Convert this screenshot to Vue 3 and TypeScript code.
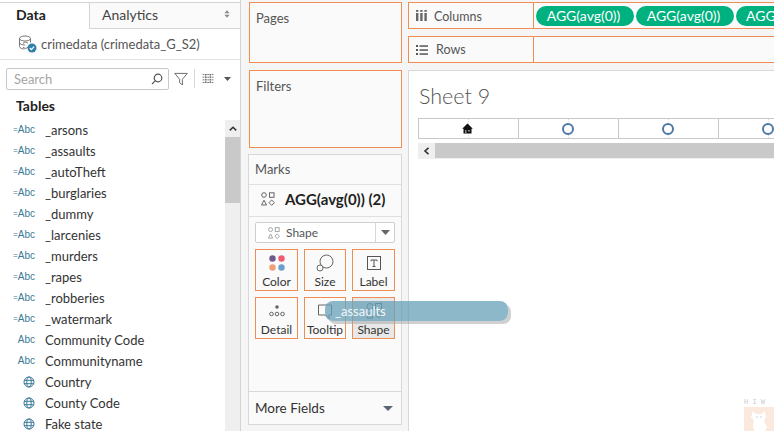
<script setup lang="ts">
type Field = { name: string; kind: 'eq' | 'abc' | 'geo' }
const names: string[] = ['_arsons', '_assaults', '_autoTheft', '_burglaries', '_dummy', '_larcenies', '_murders', '_rapes', '_robberies', '_watermark']
const fields: Field[] = [
  ...names.map((name): Field => ({ name, kind: 'eq' })),
  { name: 'Community Code', kind: 'abc' },
  { name: 'Communityname', kind: 'abc' },
  { name: 'Country', kind: 'geo' },
  { name: 'County Code', kind: 'geo' },
  { name: 'Fake state', kind: 'geo' },
]
const pills = ['AGG(avg(0))', 'AGG(avg(0))']
</script>

<template>
  <div class="app">
    <aside class="data-pane">
      <div class="tabs">
        <div class="tab active">Data</div>
        <div class="tab other">
          <span>Analytics</span>
          <svg class="updown" width="6" height="8" viewBox="0 0 7 9"><path d="M3.5 0 6.5 3.5H.5ZM3.5 9 .5 5.5h6Z" fill="#888" /></svg>
        </div>
      </div>
      <div class="source">
        <svg width="19" height="18" viewBox="0 0 19 18" fill="none" stroke="#777" stroke-width="1">
          <ellipse cx="7" cy="3.500" rx="5.500" ry="2.500" />
          <path d="M1.500 3.500v8c0 1.400 2.500 2.500 5 2.500M12.500 3.500v4M1.500 7.500c0 1.400 2.500 2.500 5.500 2.500" />
          <path d="M5 8.500a3 3 0 0 1 5 0M10 12a3 3 0 0 1-5 0" />
          <circle cx="14" cy="13" r="4.500" fill="#2f7fa8" stroke="none" />
          <path d="M11.800 13l1.600 1.600 2.700-3" stroke="#fff" stroke-width="1.200" />
        </svg>
        <span>crimedata (crimedata_G_S2)</span>
      </div>
      <div class="search-row">
        <div class="search">
          <span>Search</span>
          <svg width="12" height="12" viewBox="0 0 12 12" fill="none" stroke="#555" stroke-width="1.200"><circle cx="7" cy="5" r="3.800" /><path d="M4.200 7.800 1 11" /></svg>
        </div>
        <svg class="funnel" width="14" height="14" viewBox="0 0 15 15" fill="none" stroke="#666"><path d="M.8 1.500h13.400L9 7.800v6L6 11.500V7.800Z" /></svg>
        <div class="vsep"></div>
        <svg width="14" height="9" viewBox="0 0 14 10" stroke="#666" fill="none"><path d="M1 .5h12M1 3.500h12M1 6.500h12M1 9.500h12M4.500 0v10M9.500 0v10" stroke-dasharray="2 .6" /></svg>
        <svg class="caret" width="7" height="4" viewBox="0 0 9 5"><path d="M0 0h9L4.500 5Z" fill="#555" /></svg>
      </div>
      <div class="tables">Tables</div>
      <div class="list-wrap">
        <ul class="fields">
          <li v-for="f in fields" :key="f.name">
            <span class="type">
              <template v-if="f.kind === 'eq'"><small>=</small>Abc</template>
              <template v-else-if="f.kind === 'abc'">Abc</template>
              <svg v-else width="12" height="12" viewBox="0 0 12 12" fill="none" stroke="#3b7a98" stroke-width="1"><circle cx="6" cy="6" r="5" /><ellipse cx="6" cy="6" rx="2.200" ry="5" /><path d="M1 4.300h10M1 7.700h10" /></svg>
            </span>
            <span class="fname">{{ f.name }}</span>
          </li>
        </ul>
        <div class="vscroll">
          <div class="vbtn"><svg width="8" height="5" viewBox="0 0 8 5" fill="none" stroke="#333" stroke-width="1.500"><path d="M.8 4.400 4 1.200l3.200 3.200" /></svg></div>
          <div class="vthumb"></div>
        </div>
      </div>
    </aside>

    <section class="cards">
      <div class="card drop pages"><span class="card-title">Pages</span></div>
      <div class="card drop filters"><span class="card-title">Filters</span></div>
      <div class="marks">
        <div class="marks-title">Marks</div>
        <div class="marks-agg">
          <svg width="14" height="14" viewBox="0 0 14 14" fill="none" stroke="#666"><circle cx="3" cy="3" r="2.300" /><rect x="8.500" y=".8" width="4.500" height="4.500" /><path d="M3 8.200l2.500 4.800H.5Z" /><path d="M10.700 8l2.700 2.700-2.700 2.700L8 10.700Z" /></svg>
          <strong>AGG(avg(0)) (2)</strong>
        </div>
        <div class="select">
          <svg width="12" height="12" viewBox="0 0 14 14" fill="none" stroke="#999"><circle cx="3" cy="3" r="2.300" /><rect x="8.500" y=".8" width="4.500" height="4.500" /><path d="M3 8.200l2.500 4.800H.5Z" /><path d="M10.700 8l2.700 2.700-2.700 2.700L8 10.700Z" /></svg>
          <span class="select-text">Shape</span>
          <div class="select-arrow"><svg width="9" height="5" viewBox="0 0 9 5"><path d="M0 0h9L4.500 5Z" fill="#666" /></svg></div>
        </div>
        <div class="mark-grid">
          <div class="mark-btn">
            <svg width="18" height="18" viewBox="0 0 18 18"><circle cx="4.500" cy="4.500" r="3.200" fill="#6f5a8e" /><circle cx="13.500" cy="4.500" r="3.200" fill="#ee5b72" /><circle cx="4.500" cy="13.500" r="3.200" fill="#eca078" /><circle cx="13.500" cy="13.500" r="3.200" fill="#6b9fcb" /></svg>
            <span>Color</span>
          </div>
          <div class="mark-btn">
            <svg width="18" height="18" viewBox="0 0 18 18" fill="none" stroke="#666" stroke-width="1"><circle cx="10.500" cy="7.500" r="6.500" /><circle cx="4" cy="14" r="3" fill="#fafafa" /></svg>
            <span>Size</span>
          </div>
          <div class="mark-btn">
            <svg width="18" height="18" viewBox="0 0 18 18" fill="none" stroke="#555"><rect x="2.500" y="2.500" width="13" height="13" /><path d="M6 6h6M9 6v6.500M7.500 12.500h3M6 6v1.200M12 6v1.200" /></svg>
            <span>Label</span>
          </div>
          <div class="mark-btn">
            <svg width="18" height="18" viewBox="0 0 18 18" fill="none" stroke="#666"><circle cx="9" cy="5" r="1.800" fill="#666" stroke="none" /><circle cx="3.500" cy="12" r="1.800" /><circle cx="9" cy="12" r="1.800" /><circle cx="14.500" cy="12" r="1.800" /></svg>
            <span>Detail</span>
          </div>
          <div class="mark-btn">
            <svg width="18" height="18" viewBox="0 0 18 18" fill="none" stroke="#666"><path d="M2.500 3h13v10h-2.500v3.500L9.500 13H2.500Z" /></svg>
            <span>Tooltip</span>
          </div>
          <div class="mark-btn hot">
            <svg width="18" height="18" viewBox="0 0 18 18" fill="none" stroke="#666"><circle cx="5" cy="4.500" r="3" /><rect x="10.500" y="1.500" width="6" height="6" /><path d="M5 10l3 6H2Z" /><path d="M13.500 10l3 3-3 3-3-3Z" /></svg>
            <span>Shape</span>
          </div>
        </div>
        <div class="more">
          <span>More Fields</span>
          <svg width="10" height="5" viewBox="0 0 10 5"><path d="M0 0h10L5 5Z" fill="#5a6672" /></svg>
        </div>
      </div>
    </section>

    <main class="work">
      <div class="shelf">
        <div class="shelf-label">
          <svg width="11" height="11" viewBox="0 0 11 11" fill="#666"><rect x="0" y="3" width="2.400" height="8" /><rect x="4.200" y="3" width="2.400" height="8" /><rect x="8.400" y="3" width="2.400" height="8" /><rect x="0" y="0" width="2.400" height="1.800" /><rect x="4.200" y="0" width="2.400" height="1.800" /><rect x="8.400" y="0" width="2.400" height="1.800" /></svg>
          <span class="shelf-name columns">Columns</span>
        </div>
        <div class="shelf-body">
          <span v-for="(p, i) in pills" :key="i" class="pill">{{ p }}</span>
          <span class="pill cut">AGG</span>
        </div>
      </div>
      <div class="shelf">
        <div class="shelf-label">
          <svg width="12" height="10" viewBox="0 0 12 10" fill="#555"><rect y="0" width="2" height="2" /><rect y="4" width="2" height="2" /><rect y="8" width="2" height="2" /><rect x="3.500" y=".3" width="8.500" height="1.500" /><rect x="3.500" y="4.300" width="8.500" height="1.500" /><rect x="3.500" y="8.300" width="8.500" height="1.500" /></svg>
          <span class="shelf-name">Rows</span>
        </div>
        <div class="shelf-body"></div>
      </div>
      <div class="sheet">
        <h1>Sheet 9</h1>
        <div class="viz">
          <div class="cell">
            <svg width="11" height="11" viewBox="0 0 11 11"><path d="M5.500 .5 10.800 5.800H9.500V10.500H1.500V5.800H.2Z" fill="#111" /><path d="M3 7h1.500v3.500H3ZM6 7h2v1.500H6Z" fill="#888" /></svg>
          </div>
          <div class="cell"><i class="ring"></i></div>
          <div class="cell"><i class="ring"></i></div>
          <div class="cell"><i class="ring"></i></div>
        </div>
        <div class="hscroll">
          <div class="hbtn"><svg width="7" height="8" viewBox="0 0 7 8" fill="none" stroke="#333" stroke-width="1.600"><path d="M5.500 .8 2 4l3.500 3.200" /></svg></div>
          <div class="hthumb"></div>
        </div>
      </div>
    </main>

    <div class="drag">_assaults</div>
    <div class="mascot" aria-hidden="true">
      <span>H I W</span>
      <svg width="30" height="24" viewBox="0 0 30 24"><rect width="30" height="24" fill="#fbe9dd" /><path d="M9 4l3 3h5l4-3 1 6-2 4 3 6-2 4H10l-1-6 1-5-3-3Z" fill="#fff" /><circle cx="13" cy="10" r=".8" fill="#ccc" /><circle cx="17" cy="10" r=".8" fill="#ccc" /></svg>
    </div>
  </div>
</template>

<style scoped>
.app {
  position: relative;
  display: flex;
  width: 774px;
  height: 431px;
  overflow: hidden;
  background: #f5f5f5;
  font-family: Lato, "Liberation Sans", sans-serif;
  color: #333;
}

/* data pane */
.data-pane {
  display: flex;
  flex-direction: column;
  flex: none;
  width: 241px;
  height: 431px;
  box-sizing: border-box;
  background: #fff;
  border-right: 1px solid #d4d4d4;
}
.tabs {
  display: flex;
  flex: none;
  height: 27px;
  margin-top: 2px;
  border-top: 1px solid #d4d4d4;
  box-sizing: border-box;
}
.tab {
  display: flex;
  align-items: center;
  padding-bottom: 3px;
  font-size: 14px;
}
.tab.active {
  width: 89px;
  padding-left: 16px;
  box-sizing: border-box;
  font-weight: 700;
  color: #222;
}
.tab.other {
  flex: 1;
  justify-content: space-between;
  padding: 0 10px 3px 12px;
  background: #fafafa;
  border-left: 1px solid #d4d4d4;
  border-bottom: 1px solid #d4d4d4;
  color: #444;
}
.source {
  display: flex;
  flex: none;
  align-items: center;
  gap: 4px;
  height: 30px;
  padding-left: 18px;
  border-bottom: 1px solid #e2e2e2;
  font-size: 13px;
  color: #555;
}
.search-row {
  display: flex;
  flex: none;
  align-items: center;
  height: 21px;
  margin-top: 8px;
  padding-left: 6px;
}
.search {
  display: flex;
  align-items: center;
  justify-content: space-between;
  width: 163px;
  height: 22px;
  box-sizing: border-box;
  padding: 0 5px 0 7px;
  border: 1px solid #c8c8c8;
  border-radius: 2px;
  font-size: 13px;
  color: #a5a5a5;
}
.funnel { margin-left: 5px; }
.vsep {
  width: 1px;
  height: 19px;
  margin: 0 6px;
  background: #d8d8d8;
}
.caret { margin-left: 9px; }
.tables {
  flex: none;
  margin: 7px 0 0 16px;
  height: 20px;
  line-height: 20px;
  font-size: 14px;
  font-weight: 700;
  color: #222;
}
.list-wrap {
  position: relative;
  display: flex;
  flex: 1;
  min-height: 0;
  margin-top: 3px;
}
.fields {
  flex: 1;
  margin: 0;
  padding: 0;
  list-style: none;
  overflow: hidden;
}
.fields li {
  display: flex;
  align-items: center;
  height: 21px;
}
.type {
  display: flex;
  align-items: center;
  justify-content: flex-end;
  width: 35px;
  flex: none;
  font-family: "Liberation Sans", sans-serif;
  font-size: 10px;
  color: #3b7a98;
}
.type small { font-size: 8px; }
.fname {
  margin-left: 10px;
  font-size: 13px;
  color: #333;
  white-space: nowrap;
}
.vscroll {
  flex: none;
  width: 15px;
  margin-top: 1px;
  background: #efefef;
}
.vbtn {
  display: flex;
  align-items: center;
  justify-content: center;
  height: 17px;
}
.vthumb {
  height: 66px;
  background: #c9c9c9;
}

/* cards */
.cards {
  display: flex;
  flex-direction: column;
  flex: none;
  width: 154px;
  margin: 2px 0 0 7px;
}
.card {
  box-sizing: border-box;
  background: #fafafa;
  padding: 8px 6px;
}
.drop { border: 1px solid #ee8e54; margin-left: 1px; }
.pages { height: 61px; padding-top: 4px; }
.filters { height: 78px; margin-top: 7px; padding-top: 4px; }
.card-title {
  font-size: 13px;
  color: #555;
}
.marks {
  display: flex;
  flex-direction: column;
  height: 271px;
  margin-top: 6px;
  box-sizing: border-box;
  background: #fafafa;
  border: 1px solid #d8d8d8;
}
.marks-title {
  flex: none;
  height: 29px;
  line-height: 29px;
  padding-left: 6px;
  font-size: 13px;
  color: #555;
  border-bottom: 1px solid #e0e0e0;
}
.marks-agg {
  display: flex;
  flex: none;
  align-items: center;
  gap: 10px;
  height: 32px;
  padding-left: 12px;
  padding-bottom: 3px;
  box-sizing: border-box;
  border-bottom: 1px solid #e0e0e0;
}
.marks-agg strong {
  font-size: 15px;
  color: #222;
}
.select {
  display: flex;
  flex: none;
  align-items: center;
  height: 21px;
  margin: 5px 6px 0;
  box-sizing: border-box;
  padding-left: 12px;
  background: #fff;
  border: 1px solid #cfcfcf;
  border-radius: 2px;
}
.select-text {
  flex: 1;
  margin-left: 6px;
  font-size: 12px;
  color: #555;
}
.select-arrow {
  display: flex;
  align-items: center;
  justify-content: center;
  width: 18px;
  height: 100%;
  border-left: 1px solid #d8d8d8;
}
.mark-grid {
  display: grid;
  flex: none;
  grid-template-columns: 43px 42px 43px;
  grid-auto-rows: 42px;
  column-gap: 6px;
  row-gap: 6px;
  margin: 6px 0 0 6px;
}
.mark-btn {
  display: flex;
  flex-direction: column;
  align-items: center;
  justify-content: space-between;
  box-sizing: border-box;
  padding: 4px 0 1px;
  border: 1px solid #ee8e54;
  font-size: 12px;
  color: #333;
}
.mark-btn.hot { background: #e8e8e8; }
.more {
  display: flex;
  align-items: center;
  justify-content: space-between;
  margin-top: auto;
  height: 32px;
  padding: 0 8px 0 6px;
  border-top: 1px solid #d8d8d8;
  font-size: 13.500px;
  color: #333;
}

/* workspace */
.work {
  display: flex;
  flex-direction: column;
  flex: 1;
  min-width: 0;
  margin: 2px 0 0 6px;
}
.shelf {
  display: flex;
  flex: none;
  height: 27px;
  margin-bottom: 7px;
  box-sizing: border-box;
  background: #fafafa;
  border: 1px solid #ee8e54;
  border-right: 0;
}
.shelf-label {
  display: flex;
  flex: none;
  align-items: center;
  gap: 8px;
  width: 125px;
  box-sizing: border-box;
  padding-left: 7px;
  border-right: 1px solid #ee8e54;
  font-size: 12.500px;
  color: #555;
}
.shelf-name.columns { margin-left: -1px; margin-top: 1px; }
.shelf-body {
  display: flex;
  flex: 1;
  align-items: center;
  gap: 2px;
  min-width: 0;
  padding-left: 2px;
  overflow: hidden;
}
.pill {
  flex: none;
  width: 98px;
  height: 20px;
  line-height: 20px;
  text-align: center;
  border-radius: 10px;
  background: #00b180;
  color: #fff;
  font-size: 14px;
  padding-right: 3px;
  box-sizing: border-box;
}
.pill.cut {
  width: 38px;
  padding-left: 10px;
  padding-right: 0;
  text-align: left;
  border-radius: 10px 0 0 10px;
}
.sheet {
  flex: 1;
  box-sizing: border-box;
  padding: 0 0 0 9px;
  background: #fff;
  border-top: 1px solid #d8d8d8;
  border-left: 1px solid #d8d8d8;
}
.sheet h1 {
  margin: 13px 0 9px 1px;
  height: 25px;
  line-height: 25px;
  font-size: 21.500px;
  font-weight: 300;
  color: #555;
  white-space: nowrap;
}
.viz {
  display: flex;
  height: 21px;
  box-sizing: border-box;
  border-top: 1px solid #c8c8c8;
  border-bottom: 1px solid #c8c8c8;
  border-left: 1px solid #c8c8c8;
}
.cell {
  position: relative;
  display: flex;
  align-items: center;
  justify-content: center;
  flex: none;
  width: 100px;
  box-sizing: border-box;
  padding-right: 2px;
  border-right: 1px solid #c8c8c8;
}
.cell::after {
  content: "";
  position: absolute;
  top: 0;
  bottom: 0;
  left: 49px;
  border-left: 1px dotted #d8d8d8;
  z-index: 0;
}
.cell > * { position: relative; z-index: 1; }
.ring {
  display: block;
  width: 12px;
  height: 12px;
  box-sizing: border-box;
  border: 2px solid #4e79a7;
  border-radius: 50%;
  background: #fff;
}
.hscroll {
  display: flex;
  height: 16px;
  margin-top: 4px;
  background: #efefef;
}
.hbtn {
  display: flex;
  align-items: center;
  justify-content: center;
  flex: none;
  width: 17px;
}
.hthumb {
  flex: 1;
  margin-bottom: 1px;
  background: #c9c9c9;
}

/* overlays */
.drag {
  position: absolute;
  left: 325px;
  top: 301px;
  width: 183px;
  height: 20px;
  box-sizing: border-box;
  padding-left: 10px;
  line-height: 20px;
  border-radius: 8px;
  background: rgba(103, 160, 184, 0.75);
  box-shadow: 3px 3px 0 rgba(170, 170, 170, 0.55);
  color: #f2f7f9;
  font-size: 13px;
}
.mascot {
  position: absolute;
  right: 0;
  bottom: 0;
  width: 30px;
  height: 24px;
}
.mascot span {
  position: absolute;
  top: -9px;
  left: 0;
  width: 30px;
  font-family: "DejaVu Sans Mono", monospace;
  font-size: 7px;
  line-height: 9px;
  color: #ccc;
  white-space: nowrap;
}
.mascot svg { display: block; }
</style>
